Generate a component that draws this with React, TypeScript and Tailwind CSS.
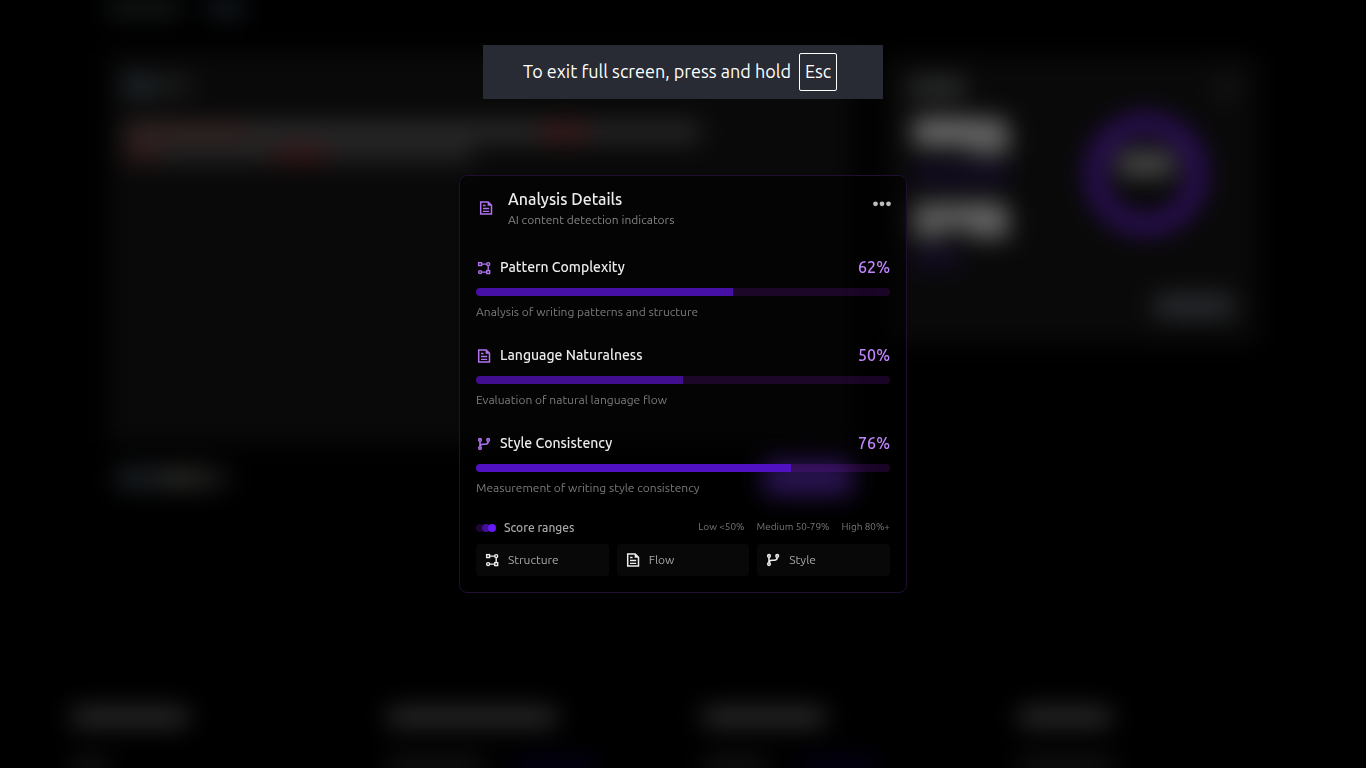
import React from "react";

type IconProps = { className?: string };

function PatternIcon({ className }: IconProps) {
  return (
    <svg viewBox="0 0 16 16" fill="none" stroke="currentColor" strokeWidth="1.4" className={className} aria-hidden="true">
      <rect x="2.65" y="2.65" width="2.9" height="2.9" />
      <circle cx="12.2" cy="4.1" r="1.5" />
      <circle cx="4.1" cy="12.1" r="1.5" />
      <rect x="10.75" y="10.65" width="2.9" height="2.9" />
      <path d="M5.6 4.1h5.1M5.6 12.1h5.1M12.2 5.6v5" />
    </svg>
  );
}

function DocumentIcon({ className }: IconProps) {
  return (
    <svg viewBox="0 0 16 16" fill="none" stroke="currentColor" strokeWidth="1.5" className={className} aria-hidden="true">
      <path d="M2.7 1.9h7.5l3.3 3.3v8.9H2.7z" />
      <path d="M9.6 1.6v4.1h4.2z" fill="currentColor" stroke="none" />
      <path d="M5 5.5h2.6M5 8.5h6.2M5 11.3h6.2" strokeWidth="1.3" />
    </svg>
  );
}

function BranchIcon({ className }: IconProps) {
  return (
    <svg viewBox="0 0 16 16" fill="none" stroke="currentColor" strokeWidth="1.6" className={className} aria-hidden="true">
      <circle cx="4" cy="3.9" r="1.3" />
      <circle cx="4" cy="12.1" r="1.3" />
      <circle cx="12.2" cy="3.9" r="1.3" />
      <path d="M4 5.3v5.4M12.2 5.3c0 2.1-.9 3-3 3H7c-1.8 0-3 .8-3 2.4" />
    </svg>
  );
}

const indicators = [
  {
    name: "Pattern Complexity",
    value: 62,
    note: "Analysis of writing patterns and structure",
    icon: PatternIcon,
    fill: "bg-[#460fa6]",
  },
  {
    name: "Language Naturalness",
    value: 50,
    note: "Evaluation of natural language flow",
    icon: DocumentIcon,
    fill: "bg-[#400e8e]",
  },
  {
    name: "Style Consistency",
    value: 76,
    note: "Measurement of writing style consistency",
    icon: BranchIcon,
    fill: "bg-[#5011c2]",
  },
];

const categories = [
  { name: "Structure", icon: PatternIcon },
  { name: "Flow", icon: DocumentIcon },
  { name: "Style", icon: BranchIcon },
];

const footerColumns = [
  { title: "w-[116px]", link: "w-9", extra: "" },
  { title: "w-[168px]", link: "w-24", extra: "w-20" },
  { title: "w-[122px]", link: "w-16", extra: "w-20" },
  { title: "w-[92px]", link: "w-24", extra: "" },
];

function PageBehind() {
  return (
    <div className="fixed inset-0 overflow-hidden bg-black" aria-hidden="true">
      <div className="flex h-full flex-col blur-md">
        <div className="mx-auto flex h-[52px] w-full max-w-[1150px] shrink-0 gap-7">
          <div className="h-4 w-[72px] bg-[#171a1b]" />
          <div className="h-4 w-9 bg-[#181f26]" />
        </div>
        <div className="mx-auto grid w-full max-w-[1150px] grid-cols-[2fr_1fr] items-start gap-8">
          <div>
            <div className="h-[392px] bg-[#090909] px-4 pt-[26px]">
              <div className="flex h-4 gap-1">
                <div className="w-8 bg-[#293239]" />
                <div className="w-8 bg-[#1e1f1f]" />
              </div>
              <div className="mt-7 flex h-5">
                <div className="w-32 bg-[#372727]" />
                <div className="w-72 bg-[#2c2c2c]" />
                <div className="w-12 bg-[#412022]" />
                <div className="w-28 bg-[#282828]" />
              </div>
              <div className="mt-1 flex h-4">
                <div className="w-9 bg-[#361e1e]" />
                <div className="w-28 bg-[#262626]" />
                <div className="w-14 bg-[#3c191c]" />
                <div className="w-36 bg-[#252525]" />
              </div>
            </div>
            <div className="mt-4 flex h-9 items-center justify-between">
              <div className="flex h-5 items-stretch pl-2">
                <div className="w-12 bg-[#1d2226]" />
                <div className="w-10 bg-[#2c2b29]" />
                <div className="w-6 bg-[#191919]" />
              </div>
              <div className="h-9 w-[90px] rounded-lg bg-[#5427a4]" />
            </div>
          </div>
          <div className="mt-1 flex h-72 flex-col bg-[#090909] px-6 pt-[22px]">
            <div className="flex h-5 justify-between">
              <div className="w-14 bg-[#2d2e2e]" />
              <div className="w-4 bg-[#1a1a1a]" />
            </div>
            <div className="flex justify-between pr-7">
              <div className="pl-1 pt-5">
                <div className="flex h-9 w-24">
                  <div className="h-7 w-14 bg-[#6c6c6c]" />
                  <div className="w-10 rounded-tr-xl bg-[#646464]" />
                </div>
                <div className="mt-3 h-4 w-24 bg-[#170d2e]" />
                <div className="mt-5 flex h-9 w-24">
                  <div className="w-8 bg-[#5c5c5c]" />
                  <div className="h-7 w-6 bg-[#5e5e5e]" />
                  <div className="w-10 rounded-tr-xl bg-[#646464]" />
                </div>
                <div className="mt-3 h-4 w-12 bg-[#170d2e]" />
              </div>
              <div className="mt-4 flex size-[120px] items-center justify-center rounded-full border-[18px] border-[#300f62]">
                <div className="mb-5 h-6 w-14 bg-[#4b4b4b]" />
              </div>
            </div>
            <div className="mt-7 flex h-6 shrink-0 justify-end">
              <div className="w-20 bg-[#292b2f]" />
            </div>
          </div>
        </div>
        <div className="mt-auto grid h-[60px] w-full shrink-0 grid-cols-4 pl-[72px] pr-8">
          {footerColumns.map((column) => (
            <div key={column.title}>
              <div className={`h-[18px] bg-[#2e2e2e] ${column.title}`} />
              <div className="mt-8 flex h-4 gap-8">
                <div className={`bg-[#161616] ${column.link}`} />
                <div className={`bg-[#05001a] ${column.extra}`} />
              </div>
            </div>
          ))}
        </div>
      </div>
    </div>
  );
}

export default function App() {
  return (
    <div className="relative min-h-screen bg-black font-['Ubuntu','Noto_Sans',sans-serif] text-white">
      <PageBehind />

      <div className="pointer-events-none fixed inset-x-0 top-[45px] z-20 flex justify-center">
        <div
          role="status"
          className="flex h-[54px] items-center gap-2 whitespace-nowrap bg-[#282b33] pl-10 pr-[46px] text-lg"
        >
          <span className="pb-0.5">To exit full screen, press and hold</span>
          <kbd className="flex h-[38px] w-[38px] items-center justify-center rounded-xs border border-white pb-0.5 font-['Ubuntu','Noto_Sans',sans-serif]">
            Esc
          </kbd>
        </div>
      </div>

      <main className="relative flex min-h-screen items-center justify-center">
        <section
          role="dialog"
          aria-labelledby="details-title"
          className="w-full max-w-md rounded-lg border border-[#220e30] bg-black/50 px-4 pb-4 pt-3"
        >
          <header className="flex items-start gap-3">
            <DocumentIcon className="mx-0.5 mt-3 size-4 shrink-0 text-[#b072ee]" />
            <div className="flex-1">
              <h1 id="details-title" className="text-base font-medium leading-[22px] text-[#ededed]">
                Analysis Details
              </h1>
              <p className="mt-0.5 text-xs text-[#858585]">AI content detection indicators</p>
            </div>
            <button type="button" aria-label="More options" className="-mr-2 flex size-8 items-center justify-center text-[#bdbdbd]">
              <svg viewBox="0 0 20 20" className="size-5" fill="currentColor" aria-hidden="true">
                <circle cx="3.5" cy="9.8" r="2.4" />
                <circle cx="10" cy="9.8" r="2.4" />
                <circle cx="16.5" cy="9.8" r="2.4" />
              </svg>
            </button>
          </header>

          <div className="mt-7 flex flex-col gap-6">
            {indicators.map(({ name, value, note, icon: Icon, fill }) => (
              <div key={name} className="flex flex-col gap-2">
                <div className="flex h-6 items-start gap-2">
                  <Icon className="mt-1 size-4 text-[#b072ee]" />
                  <h2 className="flex-1 text-sm font-medium leading-[22px] text-[#ededed]">{name}</h2>
                  <span className="text-base font-medium leading-[22px] text-[#c084fc]">{value}%</span>
                </div>
                <div
                  role="progressbar"
                  aria-label={name}
                  aria-valuenow={value}
                  aria-valuemin={0}
                  aria-valuemax={100}
                  className="h-2 overflow-hidden rounded-full bg-[#b01cff]/15"
                >
                  <div className={`h-full ${fill}`} style={{ width: `${value}%` }} />
                </div>
                <p className="text-xs text-[#7c7c7c]">{note}</p>
              </div>
            ))}
          </div>

          <div className="mt-6 flex h-4 items-start justify-between whitespace-nowrap">
            <div className="flex items-center gap-2">
              <div className="flex" aria-hidden="true">
                <span className="size-2 rounded-full bg-[#1b0836]" />
                <span className="-ml-0.5 size-2 rounded-full bg-[#43129a]" />
                <span className="-ml-0.5 size-2 rounded-full bg-[#641af5]" />
              </div>
              <span className="text-xs font-medium text-[#a8a8a8]">Score ranges</span>
            </div>
            <div className="flex gap-3 text-[10px] leading-[14px] text-[#787878]">
              <span>Low &lt;50%</span>
              <span>Medium 50-79%</span>
              <span>High 80%+</span>
            </div>
          </div>

          <div className="mt-2 grid grid-cols-3 gap-2">
            {categories.map(({ name, icon: Icon }) => (
              <div key={name} className="flex h-8 items-center gap-2 rounded bg-white/3 px-2">
                <Icon className="size-4 text-[#ededed]" />
                <span className="text-xs text-[#a8a8a8]">{name}</span>
              </div>
            ))}
          </div>
        </section>
      </main>
    </div>
  );
}
